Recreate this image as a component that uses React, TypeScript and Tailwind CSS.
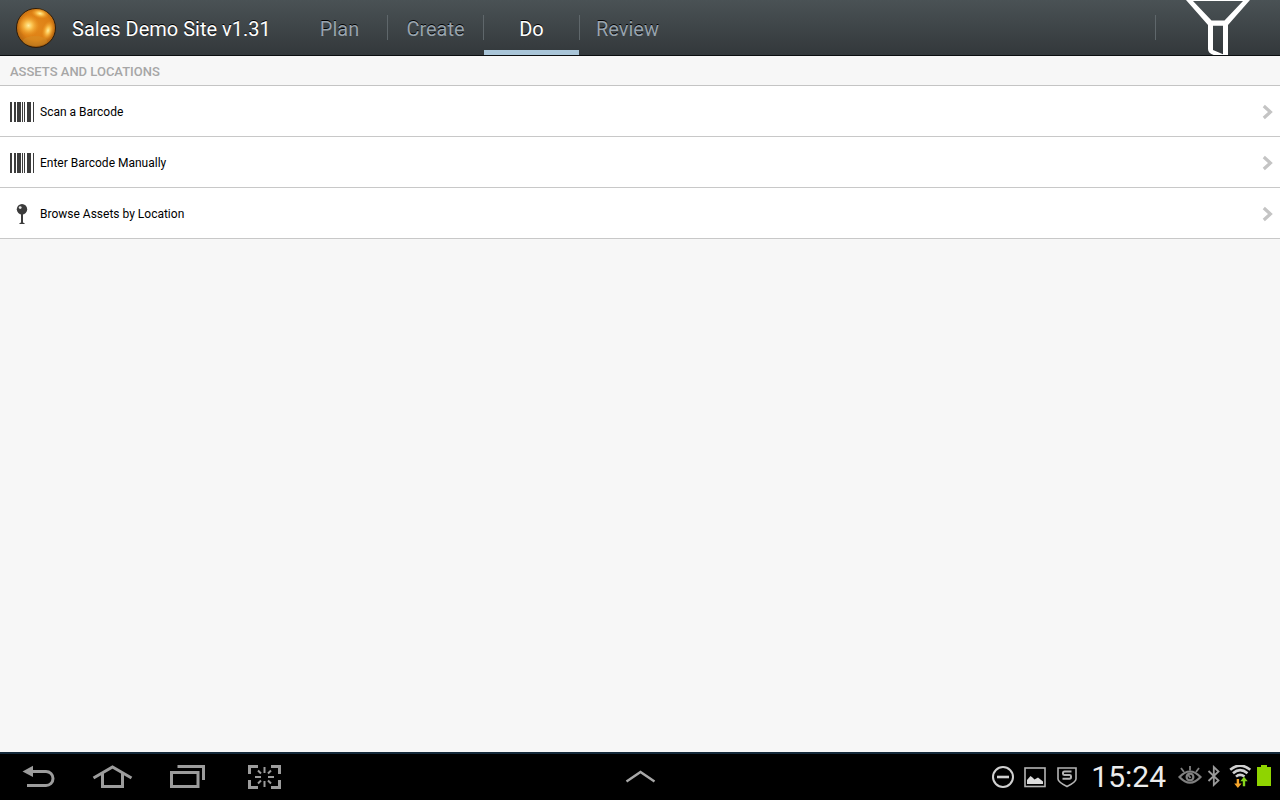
import React from "react";

type Item = { label: string; icon: "barcode" | "pin" };

const tabs = ["Plan", "Create", "Do", "Review"];

const items: Item[] = [
  { label: "Scan a Barcode", icon: "barcode" },
  { label: "Enter Barcode Manually", icon: "barcode" },
  { label: "Browse Assets by Location", icon: "pin" },
];

function Sphere() {
  return (
    <svg className="h-10 w-10 shrink-0" viewBox="0 0 40 40" aria-hidden="true">
      <defs>
        <radialGradient id="base" cx="0.5" cy="0.45" r="0.56">
          <stop offset="0" stopColor="#e48a1c" />
          <stop offset="0.65" stopColor="#dd7f14" />
          <stop offset="0.9" stopColor="#b96a12" />
          <stop offset="1" stopColor="#7a480c" />
        </radialGradient>
        <radialGradient id="glow">
          <stop offset="0" stopColor="#fff0a0" />
          <stop offset="0.35" stopColor="#ffcc58" stopOpacity="0.85" />
          <stop offset="1" stopColor="#f09a20" stopOpacity="0" />
        </radialGradient>
      </defs>
      <circle cx="20" cy="20" r="19.5" fill="url(#base)" stroke="#2c1c0c" />
      <circle cx="12.5" cy="17.5" r="11" fill="url(#glow)" />
      <ellipse cx="32" cy="22.5" rx="6" ry="10" fill="url(#glow)" transform="rotate(15 32 22.5)" />
      <ellipse cx="24" cy="5.5" rx="9" ry="5" fill="url(#glow)" transform="rotate(12 24 5.5)" />
      <ellipse cx="19" cy="33" rx="12" ry="5" fill="#d09a34" opacity="0.3" />
    </svg>
  );
}

function Funnel() {
  return (
    <svg className="h-14 w-16" viewBox="0 0 64 56" aria-hidden="true">
      <path
        fill="#fff"
        fillRule="evenodd"
        d="M0 0H64L42 25V56H31C25.5 54.5 22 53 22 49V25ZM7 1L25.5 20.4H38.5L57 1ZM27 25.8V50L37 54.3V25.8Z"
      />
    </svg>
  );
}

function ItemIcon({ kind }: { kind: Item["icon"] }) {
  if (kind === "barcode") {
    return (
      <svg className="h-5 w-6" viewBox="0 0 24 20" fill="#3c3c3c" shapeRendering="crispEdges" aria-hidden="true">
        <path d="M0 0h2v20h-2zM4 0h2v20h-2zM7 0h4v20h-4zM12 0h1v20h-1zM14 0h1v20h-1zM17 0h4v20h-4zM23 0h1v20h-1z" />
      </svg>
    );
  }
  return (
    <svg className="h-5 w-6" viewBox="0 0 24 20" aria-hidden="true">
      <circle cx="12" cy="5.2" r="5.2" fill="#3c3c3c" />
      <path d="M11 10h2v8.5l1.6 0.7v0.8h-5.2v-0.8l1.6-0.7z" fill="#3c3c3c" />
      <circle cx="10.2" cy="3.6" r="1.4" fill="#e8e8e8" />
    </svg>
  );
}

function Chevron() {
  return (
    <svg className="h-4 w-3" viewBox="0 0 12 16" fill="none" stroke="#c4c4c4" strokeWidth="3.2" aria-hidden="true">
      <path d="M1.8 2L8.4 8L1.8 14" />
    </svg>
  );
}

const navButtons = [
  {
    label: "Back",
    drawing: (
      <svg className="h-6 w-19" viewBox="0 765 76 24" fill="none" aria-hidden="true">
        <path d="M22.5 771.5L33 765.8V777Z" fill="#9c9c9c" />
        <path d="M31 771.5H46A7 7 0 0 1 46 785.5H27" stroke="#9c9c9c" strokeWidth="3" />
      </svg>
    ),
  },
  {
    label: "Home",
    drawing: (
      <svg className="h-6 w-19" viewBox="76 765 76 24" fill="none" stroke="#9c9c9c" strokeWidth="3" aria-hidden="true">
        <path d="M93.5 778L112.5 767L131.5 778" />
        <path d="M102.5 773V786.5H122.5V773" />
      </svg>
    ),
  },
  {
    label: "Recent apps",
    drawing: (
      <svg className="h-6 w-19" viewBox="152 765 76 24" fill="none" stroke="#9c9c9c" strokeWidth="3" aria-hidden="true">
        <path d="M171.5 772.5H198V786.5H171.5Z" />
        <path d="M177.5 766.5H203.5V780" />
      </svg>
    ),
  },
  {
    label: "Screenshot",
    drawing: (
      <svg className="h-6 w-19" viewBox="228 765 76 24" fill="none" stroke="#9c9c9c" strokeWidth="3" aria-hidden="true">
        <path d="M249.5 774V766.5H258M271 766.5H279.5V774M279.5 780V787.5H271M258 787.5H249.5V780" />
        <path
          strokeWidth="2"
          d="M264.5 767V773M264.5 781V787M255 777H261M268 777H274M258 770.5L261 773.5M271 770.5L268 773.5M258 783.5L261 780.5M271 783.5L268 780.5"
        />
      </svg>
    ),
  },
];

function StatusArea() {
  return (
    <div className="flex items-center justify-end pr-2">
      <div className="flex gap-2">
        <svg className="h-6 w-6" viewBox="991 765 24 24" fill="none" stroke="#d0d0d0" aria-hidden="true">
          <circle cx="1003" cy="777" r="10" strokeWidth="2" />
          <path d="M997 777H1009" strokeWidth="2.6" />
        </svg>
        <svg className="h-6 w-6" viewBox="1023 765 24 24" aria-hidden="true">
          <rect x="1025" y="768" width="20" height="18.5" fill="none" stroke="#b4b4b4" strokeWidth="1.6" />
          <path d="M1027 784V780L1030.5 776L1032.5 777.5L1034.5 779.5L1038 777.5L1043 781.5V784Z" fill="#dcdcdc" />
        </svg>
        <svg className="h-6 w-6" viewBox="1055 765 24 24" fill="none" stroke="#b4b4b4" aria-hidden="true">
          <path d="M1058 768H1076V779C1076 782 1071 784.5 1067 786.5C1063 784.5 1058 782 1058 779Z" strokeWidth="1.6" />
          <path d="M1071.5 771.5H1064.5Q1063 771.5 1063 773V773.8Q1063 775 1064.5 775H1069.5Q1071 775 1071 776.3V777Q1071 778.7 1069.5 778.7H1062.5" strokeWidth="2" />
        </svg>
      </div>
      <time className="mr-3 ml-3 text-3xl text-[#ececec]">15:24</time>
      <div className="flex gap-1">
        <svg className="h-6 w-6" viewBox="1178 765 24 24" fill="none" stroke="#808080" aria-hidden="true">
          <path d="M1179.5 777Q1190 766 1200.5 777Q1190 788.5 1179.5 777Z" strokeWidth="2.2" />
          <circle cx="1190" cy="777" r="3.4" strokeWidth="2.2" />
          <path d="M1190.5 778L1187.5 774" strokeWidth="2" />
          <path d="M1190 766V770.5M1181 768L1184 772M1199 768L1196 772" strokeWidth="1.8" />
        </svg>
        <svg className="h-6 w-[18px]" viewBox="1206 765 18 24" fill="none" stroke="#9a9a9a" strokeWidth="1.8" aria-hidden="true">
          <path d="M1208.5 771L1218.5 780.5L1213.8 785V767L1218.5 771.5L1208.5 781" />
        </svg>
        <svg className="h-6 w-6" viewBox="1228 765 24 24" fill="none" aria-hidden="true">
          <g stroke="#d0d0d0" strokeWidth="2.6">
            <path d="M1230.2 769.8Q1240 761.5 1250.3 769.8" />
            <path d="M1233 773.2Q1240 767 1247.5 773.2" />
            <path d="M1236 776.6Q1240 773 1244.5 776.6" />
          </g>
          <path d="M1237.9 788L1234.2 783.6H1236.7V779H1239.1V783.6H1241.6Z" fill="#f6a52a" />
          <path d="M1244 776.8L1247.7 781.2H1245.2V786.3H1242.8V781.2H1240.3Z" fill="#86d61c" />
        </svg>
        <svg className="h-6 w-4" viewBox="1256 765 16 24" aria-hidden="true">
          <path d="M1257 767H1261V765H1267V767H1271V786H1257Z" fill="#8fd400" />
        </svg>
      </div>
    </div>
  );
}

export default function App() {
  return (
    <div className="flex min-h-screen flex-col bg-[#f7f7f7] font-[Roboto,sans-serif]">
      <header className="flex h-14 items-stretch overflow-hidden border-b border-[#0b0e10] bg-linear-to-b from-[#4a5255] to-[#33383b]">
        <div className="flex w-[292px] shrink-0 items-center gap-4 pl-4">
          <Sphere />
          <h1 className="pt-0.5 text-xl whitespace-nowrap text-white text-shadow-[0_-1px_0_#000000]">Sales Demo Site v1.31</h1>
        </div>
        <nav className="flex" aria-label="Sections">
          {tabs.map((tab) => {
            const active = tab === "Do";
            return (
              <a
                key={tab}
                href={`#${tab.toLowerCase()}`}
                aria-current={active ? "page" : undefined}
                className="group flex w-24 items-stretch text-xl text-shadow-[0_-1px_0_#000000]"
              >
                <span
                  className={
                    active
                      ? "flex flex-1 items-center justify-center border-b-5 border-[#a9c5d8] pt-[7px] text-white"
                      : "flex flex-1 items-center justify-center pt-0.5 text-[#98a4ae]"
                  }
                >
                  {tab}
                </span>
                <span className="my-[15px] w-px bg-[#5f676b] group-last:invisible" />
              </a>
            );
          })}
        </nav>
        <div className="ml-auto flex">
          <span className="my-[15px] w-px bg-[#5f676b]" />
          <button type="button" aria-label="Filter" className="flex w-31 items-start justify-center">
            <Funnel />
          </button>
        </div>
      </header>

      <main className="flex-1">
        <h2 className="flex h-[30px] items-center border-b border-[#c4c4c4] px-2.5 pt-0.5 text-[13px] font-medium text-[#a6a6a6]">
          ASSETS AND LOCATIONS
        </h2>
        <ul>
          {items.map((item) => (
            <li key={item.label} className="border-b border-[#c8c8c8] bg-white">
              <a href="#item" className="flex h-[50px] items-center gap-1.5 pt-0.5 pr-1.5 pl-2.5 text-xs text-black">
                <ItemIcon kind={item.icon} />
                <span className="flex-1">{item.label}</span>
                <Chevron />
              </a>
            </li>
          ))}
        </ul>
      </main>

      <footer className="grid h-12 grid-cols-[1fr_auto_1fr] items-center border-t-2 border-[#14293a] bg-black">
        <div className="flex">
          {navButtons.map((button) => (
            <button key={button.label} type="button" aria-label={button.label}>
              {button.drawing}
            </button>
          ))}
        </div>
        <button type="button" aria-label="Open tray">
          <svg className="h-6 w-8" viewBox="624 765 32 24" fill="none" stroke="#a8a8a8" strokeWidth="2.4" aria-hidden="true">
            <path d="M626.5 781.5L640.5 772L654.5 781.5" />
          </svg>
        </button>
        <StatusArea />
      </footer>
    </div>
  );
}
